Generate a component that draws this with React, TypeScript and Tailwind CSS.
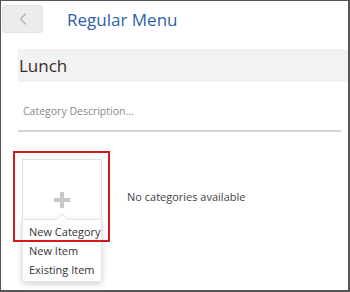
import { ChevronLeft } from 'lucide-react';

export default function App() {
  return (
    <div
      className="w-[350px] h-[292px] bg-white border-[#555] border-t border-l border-r-2 border-b-2 overflow-hidden text-[#333]"
      style={{ fontFamily: '"Open Sans", sans-serif' }}
    >
      {/* Header */}
      <div className="flex items-center pt-[4px] pl-[1px]">
        <button className="w-[41px] h-[28px] rounded-[3px] bg-[#ececec] border border-[#e2e2e2] flex items-center justify-center">
          <ChevronLeft className="w-[20px] h-[20px] text-[#b5b5b5]" strokeWidth={1.5} />
        </button>
        <h1 className="ml-[24px] text-[17px] leading-none text-[#2d5fa8]">Regular Menu</h1>
      </div>

      <div className="ml-[17px]">
        {/* Category name */}
        <div className="mt-[16px] h-[33px] bg-[#f2f2f2] flex items-center pl-[1px]">
          <span className="text-[17px] leading-none text-[#3a2b2b]">Lunch</span>
        </div>

        {/* Description */}
        <div className="mr-[7px] border-b-2 border-[#d4d4d4] pt-[22px] pb-[12px] pl-[5px] text-[10.5px] leading-[14px] text-[#888]">
          Category Description...
        </div>

        {/* Categories */}
        <div className="flex items-start mt-[27px] pl-[4px]">
          <div className="relative">
            <div className="w-[80px] h-[61px] border border-[#e0e0e0] flex items-end justify-center pb-[11px]">
              <div className="relative w-[16px] h-[16px]">
                <div className="absolute left-[6px] top-0 w-[4px] h-[16px] bg-[#c8c8c8]" />
                <div className="absolute top-[6px] left-0 w-[16px] h-[4px] bg-[#c8c8c8]" />
              </div>
            </div>

            {/* Dropdown menu */}
            <div className="absolute left-0 top-[60px] w-[80px] bg-white border border-[#e6e6e6] shadow-[0_2px_6px_rgba(0,0,0,0.18)] py-[2px] z-10">
              <div className="absolute -top-[5px] left-[35px] w-[8px] h-[8px] bg-white border-l border-t border-[#e6e6e6] rotate-45" />
              <div className="relative text-[11px] leading-[19px] text-[#333] pl-[6px]">
                <div>New Category</div>
                <div>New Item</div>
                <div>Existing Item</div>
              </div>
            </div>

            {/* Highlight */}
            <div className="absolute -left-[9px] -top-[8px] w-[97px] h-[91px] border-2 border-[#d11b1b] z-20 pointer-events-none" />
          </div>

          <p className="ml-[25px] mt-[31px] text-[11px] leading-[14px] text-[#444]">No categories available</p>
        </div>
      </div>
    </div>
  );
}
